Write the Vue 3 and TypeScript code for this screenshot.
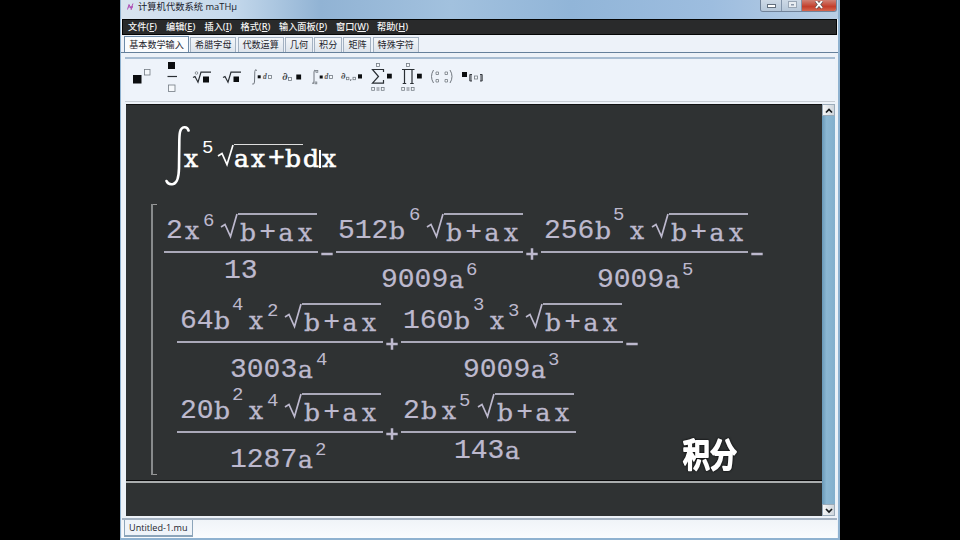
<script setup lang="ts">
type Kind = 'num' | 'let' | 'hi' | 'top' | 'rad'
interface Token { k: Kind; t: string; w: number }
interface Fraction { w: number; lead: number; num: Token[]; denLead: number; low: boolean; den: Token[]; op: string }

const tk = (k: Kind, t: string, w: number): Token => ({ k, t, w })
const root = (): Token => tk('rad', 'b+ax', 97)

const rows: Fraction[][] = [
  [
    { w: 154, lead: 2, num: [tk('num', '2', 19), tk('let', 'x', 18), tk('top', '6', 17), root()], denLead: 60, low: false, den: [tk('num', '13', 34)], op: '−' },
    { w: 187, lead: 2, num: [tk('num', '512', 51), tk('let', 'b', 20), tk('hi', '6', 17), root()], denLead: 45, low: true, den: [tk('num', '9009', 68), tk('let', 'a', 17), tk('top', '6', 12)], op: '+' },
    { w: 207, lead: 3, num: [tk('num', '256', 51), tk('let', 'b', 18), tk('hi', '5', 17), tk('let', 'x', 21), root()], denLead: 56, low: true, den: [tk('num', '9009', 68), tk('let', 'a', 17), tk('top', '5', 12)], op: '−' },
  ],
  [
    { w: 206, lead: 3, num: [tk('num', '64', 34), tk('let', 'b', 18), tk('hi', '4', 17), tk('let', 'x', 18), tk('top', '2', 17), root()], denLead: 53, low: true, den: [tk('num', '3003', 68), tk('let', 'a', 18), tk('top', '4', 12)], op: '+' },
    { w: 222, lead: 2, num: [tk('num', '160', 51), tk('let', 'b', 19), tk('hi', '3', 17), tk('let', 'x', 18), tk('top', '3', 17), root()], denLead: 62, low: true, den: [tk('num', '9009', 68), tk('let', 'a', 17), tk('top', '3', 12)], op: '−' },
  ],
  [
    { w: 206, lead: 3, num: [tk('num', '20', 34), tk('let', 'b', 18), tk('hi', '2', 17), tk('let', 'x', 18), tk('top', '4', 17), root()], denLead: 53, low: true, den: [tk('num', '1287', 68), tk('let', 'a', 17), tk('top', '2', 12)], op: '+' },
    { w: 175, lead: 2, num: [tk('num', '2', 18), tk('let', 'b', 21), tk('let', 'x', 17), tk('top', '5', 18), root()], denLead: 53, low: false, den: [tk('num', '143', 51), tk('let', 'a', 17)], op: '' },
  ],
]

const menus = [
  { t: '文件', k: 'F', w: 38 }, { t: '编辑', k: 'E', w: 38.5 }, { t: '插入', k: 'I', w: 36 },
  { t: '格式', k: 'R', w: 38.5 }, { t: '输入面板', k: 'P', w: 57 }, { t: '窗口', k: 'W', w: 41 }, { t: '帮助', k: 'H', w: 40 },
]
const tabs = [
  { t: '基本数学输入', w: 65 }, { t: '希腊字母', w: 46 }, { t: '代数运算', w: 46 }, { t: '几何', w: 28 },
  { t: '积分', w: 28 }, { t: '矩阵', w: 28 }, { t: '特殊字符', w: 46 },
]
</script>

<template>
  <div class="screen">
    <div class="window">
      <header class="titlebar">
        <svg class="logo" width="14" height="12" viewBox="0 0 14 12"><path d="M3.500 8.500l1.500-5 2 4 2-5M4 6h5M7 9l1.500-4" /></svg>
        <span class="title">计算机代数系统 maTHμ</span>
        <div class="controls">
          <span class="ctl"><svg width="20" height="10"><rect x="6.5" y="3.5" width="8" height="3" fill="#fff" stroke="#626e7d" /></svg></span>
          <span class="ctl"><svg width="19" height="10"><rect x="6.5" y=".5" width="8" height="6" fill="#e8edf2" stroke="#99a6b5" /><rect x="9" y="3" width="3" height="1.5" fill="#8b98aa" /></svg></span>
          <span class="ctl close"><svg width="34" height="10"><path d="M14 0l6 7M20 0l-6 7" stroke="#5b5355" stroke-width="3.2" /><path d="M14 0l6 7M20 0l-6 7" stroke="#fff" stroke-width="1.9" /></svg></span>
        </div>
      </header>
      <nav class="menubar">
        <span v-for="m in menus" :key="m.k" :style="{ width: m.w + 'px' }">{{ m.t }}(<u>{{ m.k }}</u>)</span>
      </nav>
      <div class="tabs">
        <span v-for="(t, i) in tabs" :key="t.t" class="tab" :class="{ active: i === 0 }" :style="{ width: t.w + 'px' }">{{ t.t }}</span>
      </div>
      <div class="toolbar">
        <svg class="tool" viewBox="0 0 30 42"><rect class="f" x="5" y="18" width="8.5" height="8.5" /><rect class="o" x="16.5" y="12.5" width="5.5" height="5.5" /></svg>
        <svg class="tool" viewBox="0 0 30 42"><rect class="f" x="10" y="5" width="7" height="7" /><path class="s" d="M9.5 19.5H19" /><rect class="o" x="10.5" y="28" width="6.5" height="6.5" /></svg>
        <svg class="tool" viewBox="0 0 30 42"><path class="s" d="M5 20.5l2-1 3 5.7 3-10H23" /><circle class="o" cx="8.5" cy="16" r="1.3" /><rect class="f" x="15" y="19.5" width="6" height="6" /></svg>
        <svg class="tool" viewBox="0 0 30 42"><path class="s" d="M5 20.5l2-1 3 5.7 3-10H23" /><rect class="f" x="15.5" y="19.5" width="5.5" height="5.5" /></svg>
        <svg class="tool" viewBox="0 0 30 42"><path class="i" d="M9 13.5q-2-2-2.2 1L6.5 25q-.3 3-2.3 2" /><rect class="f" x="9.7" y="18.3" width="3" height="3" /><text class="d" x="15" y="22">d</text><rect class="o" x="20.5" y="18.5" width="3" height="3" /></svg>
        <svg class="tool" viewBox="0 0 30 42"><text class="p" x="4" y="23">∂</text><rect class="o" x="10.5" y="20.5" width="3" height="3" /><rect class="f" x="18.3" y="17.5" width="4.8" height="5" /></svg>
        <svg class="tool" viewBox="0 0 30 42"><path class="i" d="M8 14q-2-2-2 1v9q0 4-2 2" /><rect class="o" x="8" y="13.5" width="1.8" height="1.8" /><rect class="o" x="7" y="25" width="1.8" height="1.8" /><rect class="f" x="11.7" y="18.5" width="3" height="3" /><text class="d" x="16.5" y="22">d</text><rect class="o" x="21.5" y="18.5" width="3" height="3" /></svg>
        <svg class="tool" viewBox="0 0 30 42"><text class="p small" x="3" y="22">∂</text><rect class="o" x="8.5" y="20.3" width="2.4" height="2.4" /><path class="i" d="M13 22l-.5 2" /><rect class="o" x="15" y="20.3" width="2.4" height="2.4" /><rect class="f" x="20" y="17.3" width="4" height="4.2" /></svg>
        <svg class="tool" viewBox="0 0 30 42"><path class="s" d="M15.5 15v-2.500H4.500l6 7-6 6.700h11V23" /><rect class="o" x="8.5" y="6.5" width="3" height="3" /><rect class="f" x="19" y="16.7" width="4.8" height="4.8" /><rect class="o" x="3.7" y="30.5" width="2.8" height="2.8" /><path class="i" d="M8.500 31h3M8.500 33h3" /><rect class="o" x="13.3" y="30.5" width="2.8" height="2.8" /></svg>
        <svg class="tool" viewBox="0 0 30 42"><path class="s" d="M4 12.500h12.500M6.500 12.500v14M14 12.500v14M4.700 26.500h3.500M12.200 26.500h3.500" /><rect class="o" x="8.5" y="6.5" width="3" height="3" /><rect class="f" x="19" y="16.7" width="4.8" height="4.8" /><rect class="o" x="3.7" y="30.5" width="2.8" height="2.8" /><path class="i" d="M8.500 31h3M8.500 33h3" /><rect class="o" x="13.3" y="30.5" width="2.8" height="2.8" /></svg>
        <svg class="tool" viewBox="0 0 30 42"><path class="i" d="M5.500 13q-4 6.500 0 13M22 13q4 6.500 0 13" /><path class="o" d="M8 15h2.500v2.500H8zM17 15h2.500v2.500H17zM8 22.500h2.500V25H8zM17 22.500h2.500V25H17z" /></svg>
        <svg class="tool" viewBox="0 0 30 42"><rect class="f" x="4" y="15" width="5" height="5" /><path class="s thin" d="M14 17.500h-2.200v6.500H14M13 17.500v6.500M22 17.500h2.200v6.500H22M23 17.500v6.500" /><rect class="o" x="16.5" y="19" width="3" height="3" /></svg>
      </div>
      <div class="work">
        <main class="editor">
          <section class="query">
            <svg class="integral" width="26" height="62" viewBox="0 0 26 62"><path d="M23.500 5.500C22 1 16.500 1 15 7c-.7 3-.7 6-.7 12L14 43c-.2 9-1.700 15-5.700 16-3 .7-5.800-.5-6.800-3" /></svg>
            <span class="let qx">x</span><span class="sup qs">5</span>
            <svg class="surd" width="17" height="26" viewBox="0 0 17 26"><path d="M1 12l4-2.500 5 11L16 1" /></svg>
            <span class="qroot"><i class="let">a</i><i class="let">x</i><i class="num">+</i><i class="let">b</i></span>
            <span class="let diff">d</span><span class="let">x</span>
          </section>
          <section class="answer">
            <div v-for="(row, r) in rows" :key="r" class="row">
              <template v-for="(f, i) in row" :key="i">
                <div class="frac" :style="{ width: f.w + 'px' }">
                  <div class="top-part" :style="{ paddingLeft: f.lead + 'px' }">
                    <span v-for="(t, j) in f.num" :key="j" :style="{ width: t.w + 'px' }" :class="['tok', t.k]">
                      <template v-if="t.k === 'rad'">
                        <svg class="surd" width="18" height="26" viewBox="0 0 18 26"><path d="M1 14l4-2.500 5.500 12L17 1" /></svg>
                        <span class="under"><i class="let">b</i><i class="num">+</i><i class="let">a</i><i class="let">x</i></span>
                      </template>
                      <template v-else>{{ t.t }}</template>
                    </span>
                  </div>
                  <div class="den-part" :class="{ low: f.low }" :style="{ paddingLeft: f.denLead + 'px' }">
                    <span v-for="(t, j) in f.den" :key="j" :style="{ width: t.w + 'px' }" :class="['tok', t.k]">{{ t.t }}</span>
                  </div>
                </div>
                <svg v-if="f.op" class="op" width="18" height="18"><path :d="f.op === '+' ? 'M3.300 9H14.700M9 3.300V14.700' : 'M3.300 9H14.700'" /></svg>
              </template>
            </div>
          </section>
          <section class="blank"></section>
          <svg class="caption" width="64" height="44" viewBox="0 0 64 44"><text transform="scale(1 1.200)" x="3" y="30">积分</text></svg>
        </main>
        <aside class="scroll">
          <svg class="arrow" width="13" height="12"><path d="M3 7.500l3-3 3 3" /></svg>
          <svg class="arrow" width="13" height="12"><path d="M3 4l3 3 3-3" /></svg>
        </aside>
      </div>
      <footer class="files"><span class="file">Untitled-1.mu</span></footer>
    </div>
  </div>
</template>

<style>
body { background: #000; overflow: hidden; }
</style>

<style scoped>
* { box-sizing: border-box; }
.screen { width: 960px; height: 540px; background: #000; padding-left: 120px; overflow: hidden; }
.window { width: 720px; height: 540px; display: flex; flex-direction: column; background: #edf2f8; border: solid #8fb2d0; border-width: 0 2px 2px 1px; font: 9px/12px "Noto Sans", "Noto Sans CJK SC", sans-serif; color: #1d242c; white-space: nowrap; }
.titlebar { height: 19px; flex: none; display: flex; align-items: flex-start; padding: 1px 0 0 3px; background: linear-gradient(90deg, #d9e4ef 0, #c5d9ec 110px, #91b3d4 200px, #a2c1de 330px, #91b5d8 450px, #9dbddf 590px, #b9cee4 100%); }
.logo { flex: none; }
.logo path { fill: none; stroke: #b04fb5; stroke-width: 1; }
.title { font-family: "Open Sans", "Noto Sans CJK SC", sans-serif; font-size: 9.300px; color: #18202b; }
.controls { margin: -1px 1px 0 auto; display: flex; height: 12px; border: 1px solid #71839a; border-top: 0; border-radius: 0 0 3px 3px; overflow: hidden; }
.ctl { background: linear-gradient(#cdd9e6, #b6c7d9); border-right: 1px solid #8294aa; display: flex; padding-top: 1px; }
.close { background: linear-gradient(#d08175, #c33e2b 60%, #d76750); border: 0; }
.menubar { height: 16px; margin: 0 1px; flex: none; background: #292a2b; border: 1px solid #050606; color: #f4f4f4; display: flex; align-items: center; padding-left: 5px; font-size: 9.200px; font-weight: 500; }
.menubar span { flex: none; }
.menubar u { text-underline-offset: 1px; }
.tabs { height: 18px; flex: none; display: flex; align-items: flex-end; gap: 1.300px; padding-left: 3px; border-bottom: 1px solid #65809b; background: #edf2f9; }
.tab { height: 15px; flex: none; display: flex; align-items: center; justify-content: center; font-size: 9.100px; background: linear-gradient(#f3f6f9, #dde4ec); border: 1px solid #a4b2c2; border-bottom: 0; }
.tab.active { height: 16px; background: #fafcfe; border-color: #6d8ba9; }
.toolbar { height: 45px; flex: none; margin: 4px 3px 0 4px; padding: 0 0 0 3px; display: flex; background: #eef3fa; border-top: 2px solid #a8bdd2; border-bottom: 1px solid #c7cdd4; }
.tool { width: 30px; height: 42px; flex: none; margin-top: -2px; }
.f { fill: #0b0d0f; }
.o { fill: #f6f9fc; stroke: #737b83; stroke-width: .8; }
.s { fill: none; stroke: #292e33; stroke-width: 1.200; }
.s.thin { stroke-width: .9; }
.i { fill: none; stroke: #636a72; stroke-width: .9; }
.d { font: italic bold 7.500px "Liberation Serif", serif; fill: #555; }
.p { font: bold 10.500px "DejaVu Serif", serif; fill: #444; }
.p.small { font-size: 9px; }
.work { height: 412px; flex: none; margin: 2px 3px 0 5px; display: flex; }
.editor { position: relative; width: 696px; flex: none; height: 412px; background: #2f3233; border-top: 1px solid #111; }
.let, .tok.let { font: normal 25px/28px "DejaVu Serif", serif; -webkit-text-stroke: .3px currentColor; }
.num, .tok.num { font: normal 28px/28px "Liberation Mono", monospace; -webkit-text-stroke: .2px currentColor; }
i { font-style: normal; }
.query { height: 99px; display: flex; align-items: flex-start; padding: 20px 0 0 39px; color: #fff; }
.integral { flex: none; margin-right: -7px; }
.integral path { fill: none; stroke: #fff; stroke-width: 2.600; stroke-linecap: round; }
.query .let, .query .num { -webkit-text-stroke: .6px #fff; }
.query .let { margin-top: 20px; width: 17px; }
.query .qx { width: 18px; }
.sup, .tok.hi, .tok.top { font: 19px/20px "Liberation Mono", monospace; }
.qs { margin-top: 13px; width: 15px; }
.surd { flex: none; }
.surd path { fill: none; stroke: currentColor; stroke-width: 1.700; }
.query .surd { margin-top: 19px; }
.qroot { margin-top: 19px; width: 69px; border-top: 1.500px solid #ddd; display: flex; }
.qroot i.let, .qroot i.num { width: 17px; flex: none; margin-top: 0; }
.query .diff { width: 19px; display: flex; }
.diff::after { content: ""; width: 1.500px; height: 18px; margin: 5px 0 0 0; background: #fff; }
.answer { height: 271px; margin-left: 25px; width: 650px; border-left: 2px solid #888b8c; display: flex; flex-direction: column; color: #bdb9ce; background: linear-gradient(#999, #999) 0 0/4px 1px no-repeat, linear-gradient(#999, #999) 0 100%/4px 1px no-repeat; }
.row { height: 90px; flex: none; display: flex; padding-left: 24px; }
.row:first-child { padding-left: 11px; }
.frac { flex: none; height: 90px; }
.top-part { height: 49px; display: flex; border-bottom: 2px solid #aaa9b9; }
.tok { flex: none; display: block; }
.tok.num, .tok.let { margin-top: 13px; }
.tok.hi { margin-top: 1px; }
.tok.top { margin-top: 7px; }
.tok.rad { display: flex; margin-top: 9px; }
.under { width: 79px; height: 34px; border-top: 2px solid #aaa9b9; display: flex; padding: 4px 0 0 2px; }
.under i { width: 19.300px; flex: none; }
.den-part { display: flex; height: 37px; }
.den-part .tok.num, .den-part .tok.let { margin-top: 4px; }
.den-part.low .tok.num, .den-part.low .tok.let { margin-top: 13px; }
.den-part .tok.top { margin-top: 7px; }
.op { flex: none; margin-top: 41px; }
.op path { fill: none; stroke: #bdb9ce; stroke-width: 2.500; }
.blank { margin-top: 6px; height: 34px; border-top: 2px solid #aaadae; box-shadow: 0 -1px #08090a; }
.caption { position: absolute; left: 554px; top: 326px; overflow: visible; }
.caption text { font: 500 27px "Noto Sans CJK SC", sans-serif; fill: #fff; stroke: #fff; stroke-width: 1.700; stroke-linejoin: round; filter: drop-shadow(0 0 1px #000); }
.scroll { width: 13px; flex: none; height: 412px; display: flex; flex-direction: column; justify-content: space-between; background: linear-gradient(90deg, #6998b7, #8bb7d3 35%, #83afcc); }
.arrow { background: linear-gradient(90deg, #f5f6f7, #cfd5db); border: 1px solid #9babb9; }
.arrow path { fill: none; stroke: #15191c; stroke-width: 1.700; }
.files { flex: 1; margin: 2px 1px 0; border-top: 2px solid #a3b1c1; padding-left: 2px; background: linear-gradient(#f0f4f8, #fafcfe); display: flex; align-items: flex-start; }
.file { height: 17px; width: 69px; padding: 1px 0 0 4px; background: #eff4f9; border: 1px solid #8ca5ba; border-bottom-width: 2px; border-top: 0; font: 9.100px/14px "Open Sans", sans-serif; }
</style>
